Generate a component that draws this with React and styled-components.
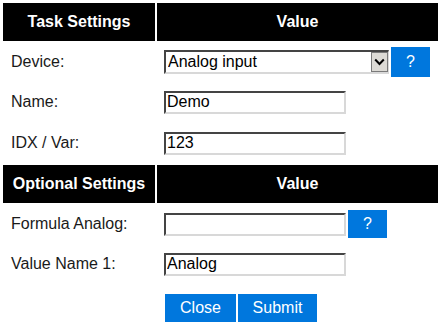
import React from "react";
import styled, { createGlobalStyle } from "styled-components";

const Global = createGlobalStyle`
  html, body { margin: 0; padding: 0; background: #fff; }
  body { font-family: "Liberation Sans", Arial, sans-serif; font-size: 16px; color: #000; }
`;

const Table = styled.div`
  display: grid;
  grid-template-columns: 152px 281px;
  column-gap: 2px;
  row-gap: 2px;
  padding: 3px;
  width: max-content;
`;

const Head = styled.div`
  height: 38px;
  background: #000;
  color: #fff;
  font-weight: bold;
  font-size: 16px;
  display: flex;
  align-items: center;
  justify-content: center;
  white-space: nowrap;
`;

const Label = styled.div`
  height: ${(p) => p.$h || 38}px;
  display: flex;
  align-items: center;
  padding-left: 8px;
  color: #1a1a1a;
  white-space: nowrap;
`;

const Cell = styled.div`
  height: ${(p) => p.$h || 38}px;
  display: flex;
  align-items: ${(p) => (p.$top ? "flex-start" : "center")};
  padding-left: ${(p) => p.$pl ?? 7}px;
  padding-top: ${(p) => p.$pt || 0}px;
  gap: 2px;
  box-sizing: border-box;
`;

const SelectBox = styled.div`
  width: 225px;
  height: 24px;
  box-sizing: border-box;
  display: flex;
  border-top: 2px solid #444;
  border-left: 2px solid #444;
  border-bottom: 2px solid #d8d8d8;
  border-right: 1px solid #d8d8d8;
  background: #fff;
`;

const NativeSelect = styled.select`
  flex: 1;
  appearance: none;
  -webkit-appearance: none;
  border: none;
  outline: none;
  background: transparent;
  font-family: "Liberation Sans", Arial, sans-serif;
  font-size: 16px;
  color: #000;
  padding: 0 0 0 2px;
  margin: 0;
  height: 20px;
  line-height: 20px;
`;

const ArrowBox = styled.div`
  width: 17px;
  height: 20px;
  box-sizing: border-box;
  border: 1px solid #7a7a7a;
  background: #dcdad5;
  display: flex;
  align-items: center;
  justify-content: center;
`;

const TextInput = styled.input`
  width: 182px;
  height: 23px;
  box-sizing: border-box;
  border-top: 2px solid #444;
  border-left: 2px solid #444;
  border-bottom: 2px solid #d8d8d8;
  border-right: 2px solid #d8d8d8;
  padding: 0 0 0 1px;
  margin: 0;
  font-family: "Liberation Sans", Arial, sans-serif;
  font-size: 16px;
  color: #000;
  outline: none;
`;

const Button = styled.button`
  background: #0077dd;
  color: #fff;
  border: none;
  margin: 0;
  padding: 0;
  width: ${(p) => p.$w}px;
  height: ${(p) => p.$h}px;
  font-family: "Liberation Sans", Arial, sans-serif;
  font-size: 16px;
  display: flex;
  align-items: center;
  justify-content: center;
  cursor: pointer;
`;

const Chevron = () => (
  <svg width="11" height="8" viewBox="0 0 11 8">
    <path d="M1.2 1.5 L5.5 6 L9.8 1.5" fill="none" stroke="#000" strokeWidth="2" />
  </svg>
);

export default function App() {
  return (
    <>
      <Global />
      <Table>
        <Head>Task Settings</Head>
        <Head>Value</Head>

        <Label>Device:</Label>
        <Cell>
          <SelectBox>
            <NativeSelect defaultValue="analog">
              <option value="analog">Analog input</option>
            </NativeSelect>
            <ArrowBox>
              <Chevron />
            </ArrowBox>
          </SelectBox>
          <Button $w={39} $h={30}>?</Button>
        </Cell>

        <Label>Name:</Label>
        <Cell>
          <TextInput defaultValue="Demo" />
        </Cell>

        <Label $h={40}>IDX / Var:</Label>
        <Cell $h={40}>
          <TextInput defaultValue="123" />
        </Cell>

        <Head>Optional Settings</Head>
        <Head>Value</Head>

        <Label>Formula Analog:</Label>
        <Cell>
          <TextInput defaultValue="" />
          <Button $w={39} $h={28}>?</Button>
        </Cell>

        <Label>Value Name 1:</Label>
        <Cell>
          <TextInput defaultValue="Analog" />
        </Cell>

        <div />
        <Cell $pl={8} $pt={9} $h={40} $top>
          <Button $w={71} $h={28}>Close</Button>
          <Button $w={79} $h={28}>Submit</Button>
        </Cell>
      </Table>
    </>
  );
}
